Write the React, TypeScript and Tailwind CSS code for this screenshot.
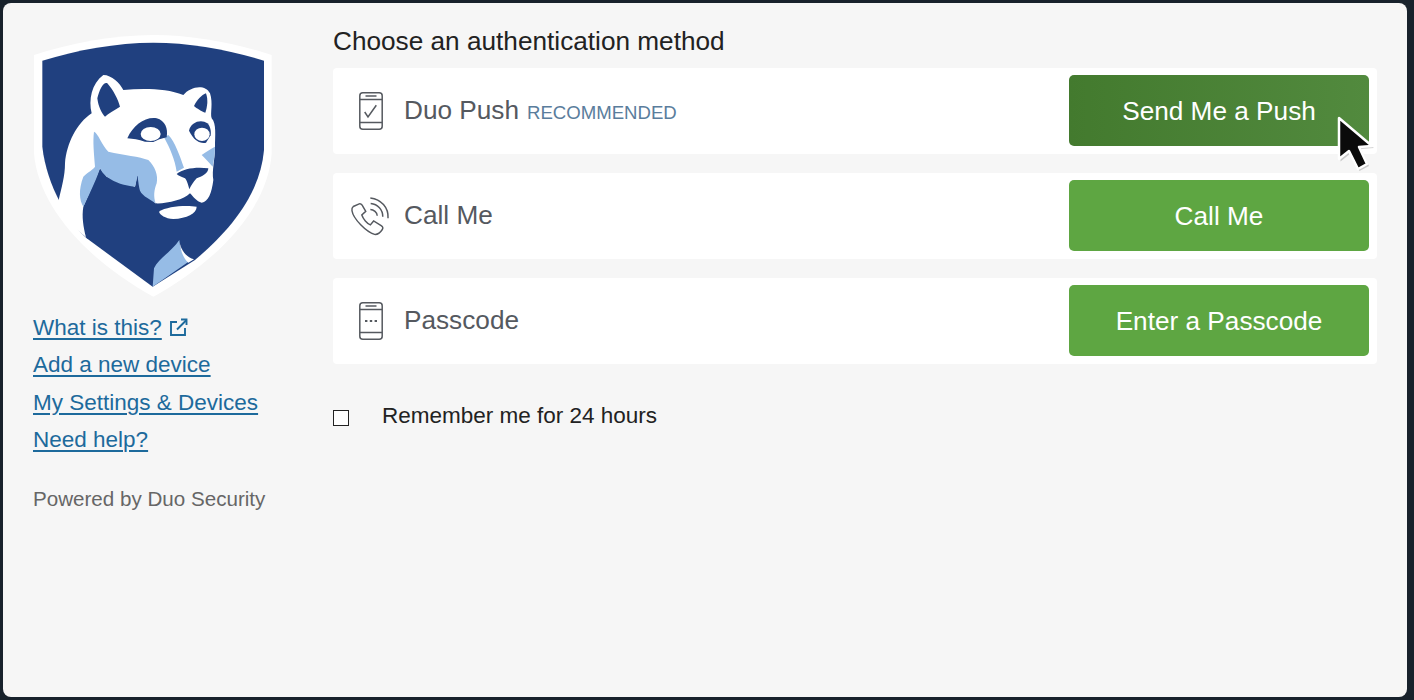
const sans = "font-['Liberation_Sans',Arial,sans-serif]";

function Shield() {
  return (
    <svg viewBox="39 39 720 798" width="240" height="266" className="block">
      <path d="M400 45C520 45 650 70 755 105L755 400C745 560 600 720 400 830C200 720 55 560 42 400L42 105C150 70 280 45 400 45Z" fill="#ffffff" />
      <path d="M400 68C510 68 630 90 732 122L732 390C720 530 620 640 525 720L398 800L200 655C150 610 80 500 67 380L67 122C170 90 290 68 400 68Z" fill="#20407f" />
      {/* lion head and neck */}
      <path d="M115 545C125 500 135 470 135 430C140 370 170 310 215 280C205 240 215 190 250 165C275 165 300 190 310 210C370 205 440 205 490 225C510 200 555 190 570 220C580 250 570 280 575 295C590 310 585 350 585 380C585 420 575 450 580 480C575 520 565 545 545 548C530 545 520 530 510 520C490 540 440 552 405 550L352 465L345 500L260 470L240 445L190 560C185 590 190 620 198 652L150 610Z" fill="#ffffff" />
      <path d="M222 335C235 340 245 375 265 395C310 405 360 410 385 420C405 440 415 465 410 490C402 510 400 530 407 550C385 535 360 525 358 505C355 490 354 475 352 465C350 480 348 490 345 500C315 497 285 488 260 470C250 462 245 455 240 445C232 470 215 510 190 560C178 540 175 510 190 470C205 455 218 450 225 440C222 400 218 365 222 335Z" fill="#96bce6" />
      <path d="M432 352L445 345C465 365 480 410 492 443L470 455C465 420 450 385 432 352Z" fill="#96bce6" />
      <path d="M545 405C560 395 575 385 585 380C585 400 582 420 578 440C565 425 555 415 545 405Z" fill="#96bce6" />
      {/* ears */}
      <path d="M232 235C238 210 250 185 262 190C280 210 295 240 300 260C285 270 265 280 255 290C245 280 235 260 232 235Z" fill="#20407f" />
      <path d="M522 258C530 240 545 225 558 220C565 240 562 260 556 278C545 275 530 265 522 258Z" fill="#20407f" />
      {/* eyes */}
      <path d="M322 355C340 315 375 290 410 295C435 302 445 325 440 352L418 358L400 366L375 365C355 358 340 357 322 355Z" fill="#20407f" />
      <ellipse cx="392" cy="342" rx="30" ry="21" fill="#ffffff" />
      <path d="M507 332C512 305 545 296 562 310C570 318 574 332 572 346L558 368C540 372 520 360 507 332Z" fill="#20407f" />
      <ellipse cx="546" cy="343" rx="23" ry="20" fill="#ffffff" />
      {/* nose and chin */}
      <path d="M470 462C490 445 530 440 565 445C565 460 545 470 530 475C520 485 512 500 508 508C505 495 500 480 495 475C485 470 475 468 470 462Z" fill="#20407f" />
      <path d="M417 575C440 558 500 555 530 560C530 580 500 595 460 597C435 595 420 585 417 575Z" fill="#ffffff" />
      {/* lower chest */}
      <path d="M398 800L402 745C415 715 455 695 478 660C478 685 490 710 510 722Z" fill="#96bce6" />
      <path d="M478 660C480 685 495 710 522 718L505 728C490 715 480 690 478 660Z" fill="#ffffff" />
    </svg>
  );
}

function ExternalIcon() {
  return (
    <svg viewBox="0 0 18 18" width="18" height="18" fill="none" stroke="#1d6a9c" strokeWidth="1.9" className="mb-[5px] ml-[8px] inline-block">
      <path d="M7 4H1v13h14V10" />
      <path d="M7 11.5L16.5 2" />
      <path d="M11 1.5h5.5v5.5" />
    </svg>
  );
}

function PhoneFrame({ children }: { children?: React.ReactNode }) {
  return (
    <svg viewBox="0 0 24 38" width="24" height="38" fill="none" stroke="#55595f" strokeWidth="1.5">
      <rect x="0.8" y="0.8" width="22.4" height="36.4" rx="3" />
      <path d="M1 7.5H23M1 30.5H23" />
      <path d="M6.5 4H17.5" />
      {children}
    </svg>
  );
}

function PushIcon() {
  return (
    <PhoneFrame>
      <path d="M5.7 20L9 25L17.3 13.3" />
    </PhoneFrame>
  );
}

function PasscodeIcon() {
  return (
    <PhoneFrame>
      <path d="M6 19H8.4M10.8 19H13.2M15.6 19H18" strokeWidth="2" />
    </PhoneFrame>
  );
}

function CallIcon() {
  return (
    <svg viewBox="60 400 125 122" width="41" height="40" fill="none" stroke="#55595f" strokeWidth="4.5">
      <path d="M70 432L88 424C92 423 95 425 97 428L108 447L96 458C100 470 112 484 122 488L132 476L155 490C160 493 162 498 158 503C152 512 145 518 135 517C110 510 70 470 66 445C65 440 66 435 70 432Z" />
      <path d="M122 406C155 410 178 435 176 468" />
      <path d="M123 423C145 425 160 442 160 463" />
      <path d="M122 441C132 441 143 450 143 460" />
    </svg>
  );
}

function Cursor() {
  return (
    <svg viewBox="0 0 44 60" width="44" height="60" className="absolute left-[1334px] top-[113px]">
      <path d="M6.5 7L6.5 48.5L16.5 40.5L25.5 58L35 53L27 36L40 35Z" fill="#000000" fillOpacity="0.18" />
      <path d="M5 5L5 46L15 38L24 56L33 51L25 34L38 33Z" fill="#0b0b0b" stroke="#ffffff" strokeWidth="2.5" strokeLinejoin="round" />
    </svg>
  );
}

const methods = [
  { icon: <PushIcon />, label: "Duo Push", note: "RECOMMENDED", action: "Send Me a Push", active: true },
  { icon: <CallIcon />, label: "Call Me", action: "Call Me" },
  { icon: <PasscodeIcon />, label: "Passcode", action: "Enter a Passcode" },
];

export default function App() {
  return (
    <div className={`${sans} relative h-[700px] w-[1414px] overflow-hidden bg-[#18222c] py-[3px] pl-[3px] pr-[7px]`}>
      <div className="flex h-full rounded-[8px] bg-[#f6f6f6]">
        <aside className="w-[330px] shrink-0 pl-[30px] pt-[30px]">
          <Shield />
          <ul className="mt-[10px] text-[22.5px] leading-[37.4px] text-[#1d6a9c]">
            <li className="whitespace-nowrap"><a href="#" className="underline decoration-2 underline-offset-[3px]">What is this?</a><ExternalIcon /></li>
            <li><a href="#" className="underline decoration-2 underline-offset-[3px]">Add a new device</a></li>
            <li><a href="#" className="underline decoration-2 underline-offset-[3px]">My Settings &amp; Devices</a></li>
            <li><a href="#" className="underline decoration-2 underline-offset-[3px]">Need help?</a></li>
          </ul>
          <p className="mt-[26px] whitespace-nowrap text-[20.6px] leading-[28px] text-[#666666]">Powered by Duo Security</p>
        </aside>
        <main className="min-w-0 flex-1 pr-[30px]">
          <h1 className="mt-[23px] text-[26.2px] leading-[30px] text-[#222222]">Choose an authentication method</h1>
          <div className="mt-[12px] flex flex-col gap-[19px]">
            {methods.map((m) => (
              <div key={m.label} className="flex h-[86px] items-center rounded-[4px] bg-white pr-[8px]">
                <div className="flex w-[71px] shrink-0 justify-center pl-[4px]">{m.icon}</div>
                <div className="flex-1 whitespace-nowrap text-[26.2px] text-[#55595f]">
                  {m.label}
                  {m.note && <span className="ml-[8px] text-[18.6px] text-[#5a7d9c]">{m.note}</span>}
                </div>
                <button className={`mb-[1px] h-[71px] w-[300px] rounded-[5px] pt-[2px] text-[26.2px] text-white ${m.active ? "bg-linear-to-r from-[#437a2e] to-[#528a3e]" : "bg-[#5ea642]"}`}>
                  {m.action}
                </button>
              </div>
            ))}
          </div>
          <label className="mt-[38px] flex items-center text-[22.5px] leading-[28px] text-[#222222]">
            <span className="mt-[3px] h-[16px] w-[16px] shrink-0 border border-[#222222] bg-white" />
            <span className="ml-[33px]">Remember me for 24 hours</span>
          </label>
        </main>
      </div>
      <Cursor />
    </div>
  );
}
